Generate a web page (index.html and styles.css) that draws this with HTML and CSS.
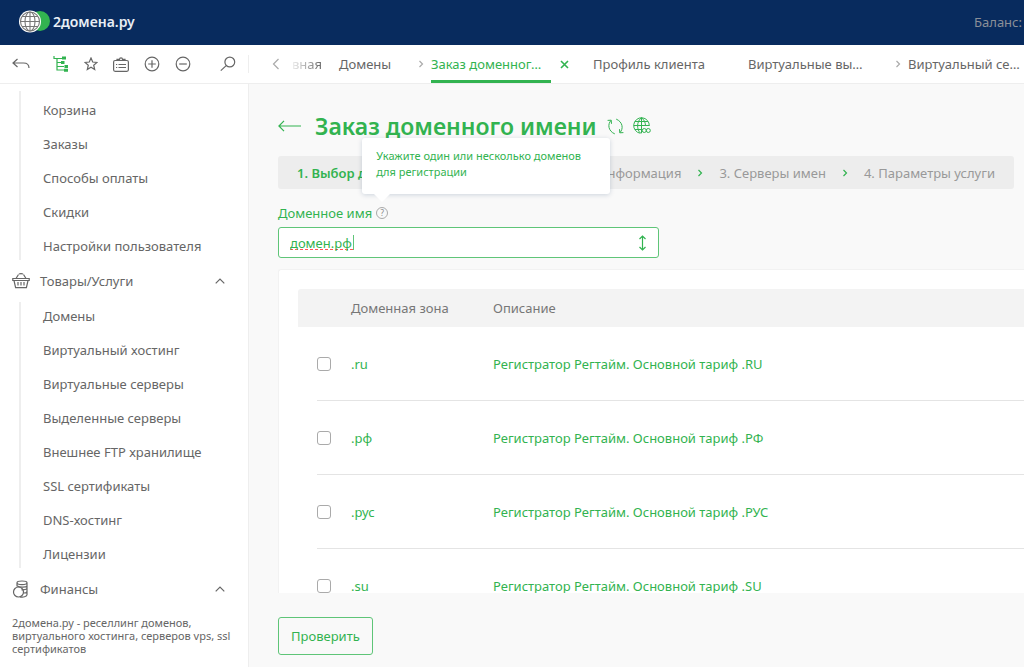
FILE: index.html
```html
<!DOCTYPE html>
<html lang="ru">
<head>
<meta charset="utf-8">
<meta name="viewport" content="width=device-width, initial-scale=1">
<title>Заказ доменного имени</title>
<link rel="stylesheet" href="styles.css">
</head>
<body>
<header class="topbar">
  <a class="brand" href="#">
    <svg class="brand-mark" width="32" height="23" viewBox="0 0 32 23">
      <circle cx="21" cy="11" r="10" fill="#32b350" stroke="none"/>
      <circle cx="11" cy="11.500" r="11" fill="#fff" stroke="none"/>
      <g fill="none" stroke="#777" stroke-width="1.100"><circle cx="11" cy="11.500" r="9.500"/><ellipse cx="11" cy="11.500" rx="5" ry="9.500"/><path d="M11 2v19M1.500 11.500h19M3 6.500h16M3 16.500h16"/></g>
    </svg>
    <span>2домена.ру</span>
  </a>
  <span class="balance">Баланс:</span>
</header>

<div class="toolbar">
  <div class="tools">
    <button class="tool" aria-label="Назад"><svg width="18" height="12" viewBox="0 0 18 12"><path d="M5.500 1 1 5l4.500 4M1 5h10.500c3.500 0 5.500 2 5.500 5"/></svg></button>
    <button class="tool tool-active" aria-label="Дерево"><svg width="16" height="16" viewBox="0 0 16 16"><path d="M1 0v2.500h8M4 2.500v11.500h7M4 6.500h4M4 10.500h7"/><path class="solid" d="M9 .5h4v3H9zM8 5h3.500v3H8zM11.500 9h3.500v3h-3.500zM11 12.800h4v3h-4z"/></svg></button>
    <button class="tool" aria-label="Избранное"><svg width="14" height="14" viewBox="0 0 14 14"><path d="m7 1 1.700 4 4.300.4-3.300 2.800 1 4.300L7 10.300l-3.700 2.200 1-4.300L1 5.400 5.300 5z"/></svg></button>
    <button class="tool" aria-label="Карточка"><svg width="16" height="15" viewBox="0 0 16 15"><rect x=".6" y="3.500" width="14.800" height="10.800" rx="1.500"/><path d="M4 3.500V2.400h2.500C6.500 1.400 7 .8 8 .8s1.500.6 1.500 1.600H12v1.100M3 7.500h1.200M5.500 7.500H13M3 10.500h1.200M5.500 10.500H13"/></svg></button>
    <button class="tool" aria-label="Развернуть"><svg width="16" height="16" viewBox="0 0 16 16"><circle cx="8" cy="8" r="6.800"/><path d="M8 4.200v7.600M4.200 8h7.600"/></svg></button>
    <button class="tool" aria-label="Свернуть"><svg width="16" height="16" viewBox="0 0 16 16"><circle cx="8" cy="8" r="6.800"/><path d="M4.200 8h7.600"/></svg></button>
    <button class="tool tool-search" aria-label="Поиск"><svg width="16" height="16" viewBox="0 0 16 16"><circle cx="9.800" cy="6" r="4.900"/><path d="m6.200 9.600-5.400 5"/></svg></button>
  </div>
  <nav class="tabs">
    <button class="scroll-left" aria-label="Влево"><svg width="8" height="12" viewBox="0 0 8 12"><path d="M6.500 1 1.500 6l5 5"/></svg></button>
    <a class="tab tab-cut" href="#">вная</a>
    <a class="tab tab-short" href="#">Домены</a>
    <svg class="sep" width="6" height="8" viewBox="0 0 6 8"><path d="m1.500 1 3 3-3 3"/></svg>
    <a class="tab tab-current" href="#">Заказ доменног…</a>
    <button class="close" aria-label="Закрыть"><svg width="9" height="9" viewBox="0 0 9 9"><path d="m1 1 7 7M8 1 1 8"/></svg></button>
    <a class="tab tab-wide" href="#">Профиль клиента</a>
    <a class="tab tab-spaced" href="#">Виртуальные вы…</a>
    <svg class="sep" width="6" height="8" viewBox="0 0 6 8"><path d="m1.500 1 3 3-3 3"/></svg>
    <a class="tab" href="#">Виртуальный се…</a>
  </nav>
</div>

<div class="layout">
  <aside class="sidebar">
    <nav class="menu">
      <ul class="submenu">
        <li><a href="#">Корзина</a></li>
        <li><a href="#">Заказы</a></li>
        <li><a href="#">Способы оплаты</a></li>
        <li><a href="#">Скидки</a></li>
        <li><a href="#">Настройки пользователя</a></li>
      </ul>
      <button class="group">
        <svg width="18" height="16" viewBox="0 0 18 16"><path d="M.8 5.500h16.400v2H.8zM2 7.500l1.600 7.200h10.800L16 7.500M4 5.500l2.500-4M14 5.500l-2.500-4M7 1.200c.8-.8 3.200-.8 4 0M6 9v3.500M9 9v3.500M12 9v3.500"/></svg>
        <span>Товары/Услуги</span>
        <svg class="caret-up" width="10" height="6" viewBox="0 0 10 6"><path d="m.7 5.300 4.300-4.300 4.300 4.300"/></svg>
      </button>
      <ul class="submenu">
        <li><a href="#">Домены</a></li>
        <li><a href="#">Виртуальный хостинг</a></li>
        <li><a href="#">Виртуальные серверы</a></li>
        <li><a href="#">Выделенные серверы</a></li>
        <li><a href="#">Внешнее FTP хранилище</a></li>
        <li><a href="#">SSL сертификаты</a></li>
        <li><a href="#">DNS-хостинг</a></li>
        <li><a href="#">Лицензии</a></li>
      </ul>
      <button class="group">
        <svg width="18" height="18" viewBox="0 0 18 18"><circle cx="6.500" cy="12" r="5"/><path d="M5 6.500V2.800c0-2.400 10-2.400 10 0v12c0 2-4 2.600-7 2M5 2.800c0 2.400 10 2.400 10 0M5.300 6c2 1.500 9.700 1.500 9.700-.5M9.500 9.800c2 0 5.500-.3 5.500-1.800M11.500 13c2 0 3.500-.7 3.500-1.800"/></svg>
        <span>Финансы</span>
        <svg class="caret-up" width="10" height="6" viewBox="0 0 10 6"><path d="m.7 5.300 4.300-4.300 4.300 4.300"/></svg>
      </button>
    </nav>
    <p class="about">2домена.ру - реселлинг доменов, виртуального хостинга, серверов vps, ssl сертификатов</p>
  </aside>

  <main class="content">
    <div class="heading">
      <button class="back" aria-label="Назад"><svg width="24" height="12" viewBox="0 0 24 12"><path d="M6 .8.900 6 6 11.200M1 6h22"/></svg></button>
      <h1>Заказ доменного имени</h1>
      <button class="head-tool" aria-label="Обновить"><svg width="17" height="17" viewBox="0 0 17 17"><path d="M4 2.500C.5 6 1 13 7.800 15.900M13 14.500C16.500 11 16 4 9.200 1.100M.6 2.400 4.200 2.200 4.500 5.800M16.400 14.600l-3.600.2-.3-3.600"/></svg></button>
      <button class="head-tool" aria-label="Ссылка"><svg width="18" height="18" viewBox="0 0 18 18"><path d="M7.500 16.300A7.800 7.800 0 1 1 16.300 9M8.500.800v15.500M8.500.800C3.500 4 3.500 13 7.500 16M8.500.800C11.500 2.800 12.500 6 12.500 9M.800 8.500H16M2 4.500h13M2 12.500h6"/><circle cx="11.300" cy="13.500" r="2"/><circle cx="15.300" cy="13.500" r="2"/></svg></button>
    </div>

    <ol class="steps">
      <li class="step-current">1. Выбор домена</li>
      <li class="step-wide">2. Дополнительная информация</li>
      <li><svg width="6" height="8" viewBox="0 0 6 8"><path d="m1.500 1 3 3-3 3"/></svg></li>
      <li>3. Серверы имен</li>
      <li><svg width="6" height="8" viewBox="0 0 6 8"><path d="m1.500 1 3 3-3 3"/></svg></li>
      <li>4. Параметры услуги</li>
    </ol>

    <div class="field">
      <div class="field-label">
        <label for="domain">Доменное имя</label>
        <span class="help">?
          <span class="hint" role="tooltip">Укажите один или несколько доменов для регистрации</span>
        </span>
      </div>
      <div class="field-box">
        <input id="domain" type="text" value="домен.рф">
        <span class="text-caret"></span>
        <button class="resize" aria-label="Развернуть поле"><svg width="9" height="16" viewBox="0 0 9 16"><path d="M4.500 1.500v13M1.500 4l3-3 3 3M1.500 12l3 3 3-3"/></svg></button>
      </div>
    </div>

    <section class="card">
      <table class="zones">
        <thead><tr><th class="c-check"></th><th class="c-zone">Доменная зона</th><th>Описание</th></tr></thead>
        <tbody>
          <tr><td class="c-check"><input type="checkbox" id="z1"></td><td><label for="z1">.ru</label></td><td>Регистратор Регтайм. Основной тариф .RU</td></tr>
          <tr><td class="c-check"><input type="checkbox" id="z2"></td><td><label for="z2">.рф</label></td><td>Регистратор Регтайм. Основной тариф .РФ</td></tr>
          <tr><td class="c-check"><input type="checkbox" id="z3"></td><td><label for="z3">.рус</label></td><td>Регистратор Регтайм. Основной тариф .РУС</td></tr>
          <tr><td class="c-check"><input type="checkbox" id="z4"></td><td><label for="z4">.su</label></td><td>Регистратор Регтайм. Основной тариф .SU</td></tr>
        </tbody>
      </table>
    </section>

    <div class="actions"><button class="check">Проверить</button></div>
  </main>
</div>
</body>
</html>
```

FILE: styles.css
```css
* { box-sizing: border-box; }

body {
  margin: 0;
  height: 100vh;
  overflow: hidden;
  display: flex;
  flex-direction: column;
  background: #f9f9f9;
  color: #666;
  font: 13px/18px "Noto Sans", "Open Sans", sans-serif;
}

a { color: inherit; text-decoration: none; }
button { padding: 0; border: 0; background: none; color: inherit; font: inherit; cursor: pointer; }
ul, ol { margin: 0; padding: 0; list-style: none; }
svg { display: block; flex: none; fill: none; stroke: currentColor; stroke-width: 1.2; }

.topbar {
  flex: none;
  height: 45px;
  display: flex;
  align-items: center;
  justify-content: space-between;
  padding: 0 2px 2px 19px;
  background: #082b5e;
}
.brand { display: flex; align-items: center; gap: 2px; color: #e8eef5; font-size: 14px; font-weight: 600; }
.balance { color: #8a8f98; }

.toolbar {
  flex: none;
  height: 39px;
  display: flex;
  background: #fff;
  border-bottom: 1px solid #eee;
}
.tools {
  flex: none;
  width: 249px;
  display: flex;
  align-items: center;
  gap: 15px;
  padding: 0 13px 0 12px;
  background: linear-gradient(#eee, #eee) 100% 50% / 1px 18px no-repeat;
}
.tool { display: flex; align-items: center; }
.tool-active { color: #32b350; margin-left: 8px; }
.tool-active .solid { fill: currentColor; stroke: none; }
.tool-search { margin-left: auto; }

.tabs { flex: 1; min-width: 0; display: flex; align-items: stretch; overflow: hidden; white-space: nowrap; padding-left: 23px; }
.tabs > button, .sep { flex: none; align-self: center; }
.scroll-left { color: #aaa; width: 20px; }
.tab { width: 120px; flex: none; padding-top: 10px; }
.tab-short { width: 79px; }
.tab-wide { width: 155px; }
.tab-spaced { width: 147px; }
.tab-cut {
  width: 47px;
  -webkit-mask-image: linear-gradient(to right, rgba(0, 0, 0, 0.1), #000 30px);
  mask-image: linear-gradient(to right, rgba(0, 0, 0, 0.1), #000 30px);
}
.sep { margin-right: 7px; color: #aaa; }
.tab-current { color: #32b350; border-bottom: 3px solid #32b350; }
.close { width: 42px; padding-left: 9px; color: #32b350; }
.close svg { stroke-width: 1.6; }

.layout { flex: 1; min-height: 0; display: flex; }
.sidebar {
  flex: none;
  width: 249px;
  display: flex;
  flex-direction: column;
  background: #fff;
  border-right: 1px solid #eee;
}
.menu { flex: 1; min-height: 0; overflow: hidden; padding-top: 4px; }
.submenu {
  margin-left: 19px;
  padding-left: 24px;
  background: linear-gradient(#eee, #eee) 0 3px / 2px calc(100% - 6px) no-repeat;
}
.submenu:first-child { padding-top: 5px; }
.submenu a { display: block; line-height: 34px; }
.group { width: 100%; height: 36px; display: flex; align-items: center; gap: 10px; padding: 0 23px 0 12px; }
.caret-up { margin-left: auto; }
.about { margin: 0; padding: 0 12px 12px; font-size: 11px; line-height: 13px; }

.content { flex: 1; min-width: 0; display: flex; flex-direction: column; padding: 26px 0 12px 29px; }
.heading { flex: none; display: flex; align-items: center; height: 32px; color: #32b350; }
.back { margin-right: 13px; }
h1 { margin: 0 10px 0 0; font-size: 23px; line-height: 32px; font-weight: 600; }
.head-tool { margin-right: 9px; }
.head-tool svg { stroke-width: 1; }

.steps {
  flex: none;
  display: flex;
  align-items: center;
  height: 33px;
  margin: 14px 10px 0 0;
  padding: 0 19px;
  gap: 16px;
  border-radius: 3px;
  background: #ededed;
  color: #999;
  white-space: nowrap;
}
.steps svg, .step-current { color: #32b350; }
.step-current { font-weight: 600; }
.step-wide { flex: 1; text-align: right; }

.field { color: #32b350; margin-top: 15px; max-width: 381px; }
.field-label { display: flex; align-items: center; gap: 4px; height: 18px; }
.help {
  position: relative;
  width: 12px;
  height: 12px;
  border: 1px solid #aaa;
  border-radius: 50%;
  color: #888;
  font-size: 8px;
  line-height: 10px;
  text-align: center;
}
.hint {
  position: absolute;
  left: -15px;
  bottom: 24px;
  width: 248px;
  height: 56px;
  padding: 10px 14px;
  border-radius: 3px;
  background: #fff;
  box-shadow: 0 1px 5px rgba(8, 43, 94, 0.18);
  color: #32b350;
  font-size: 11px;
  line-height: 16px;
  text-align: left;
}
.hint::after {
  content: "";
  position: absolute;
  left: 12px;
  top: 100%;
  border: 8px solid transparent;
  border-top-color: #fff;
  border-bottom: 0;
}
.field-box { position: relative; margin-top: 5px; }
.field-box input {
  display: block;
  width: 100%;
  height: 31px;
  padding: 0 30px 0 11px;
  border: 1px solid #5fc578;
  border-radius: 3px;
  background: repeating-linear-gradient(to right, #f55 0 3px, transparent 3px 5px) 11px 21px / 63px 1px no-repeat #fff;
  color: #32b350;
  font: inherit;
  outline: 0;
}
.text-caret { position: absolute; left: 75px; top: 8px; width: 1px; height: 15px; background: #5fc578; }
.resize { position: absolute; right: 12px; top: 8px; }

.card {
  flex: 1;
  min-height: 0;
  overflow: hidden;
  margin-top: 11px;
  padding: 19px 0 0 19px;
  border: solid #f2f2f2;
  border-width: 1px 0 0 1px;
  border-radius: 3px 0 0 0;
  background: #fff;
}
.zones { width: 100%; table-layout: fixed; border-collapse: collapse; text-align: left; }
.zones th { height: 38px; padding: 0; background: #f3f3f3; color: #777; font-weight: 400; }
.zones th:first-child { border-top-left-radius: 3px; }
.zones td { height: 74px; padding: 0; color: #32b350; background: linear-gradient(#e4e4e4, #e4e4e4) 0 100% / 100% 1px no-repeat; }
.zones .c-check { width: 53px; padding-left: 19px; }
.zones td.c-check { background-position: 19px 100%; }
.c-zone { width: 142px; }
.zones input {
  appearance: none;
  display: block;
  width: 14px;
  height: 14px;
  margin: 0;
  border: 1px solid #aaa;
  border-radius: 3px;
  background: #fff;
}

.actions { flex: none; margin-top: 24px; }
.check { height: 38px; padding: 0 12px; border: 1px solid #5fc578; border-radius: 3px; color: #32b350; }
```
